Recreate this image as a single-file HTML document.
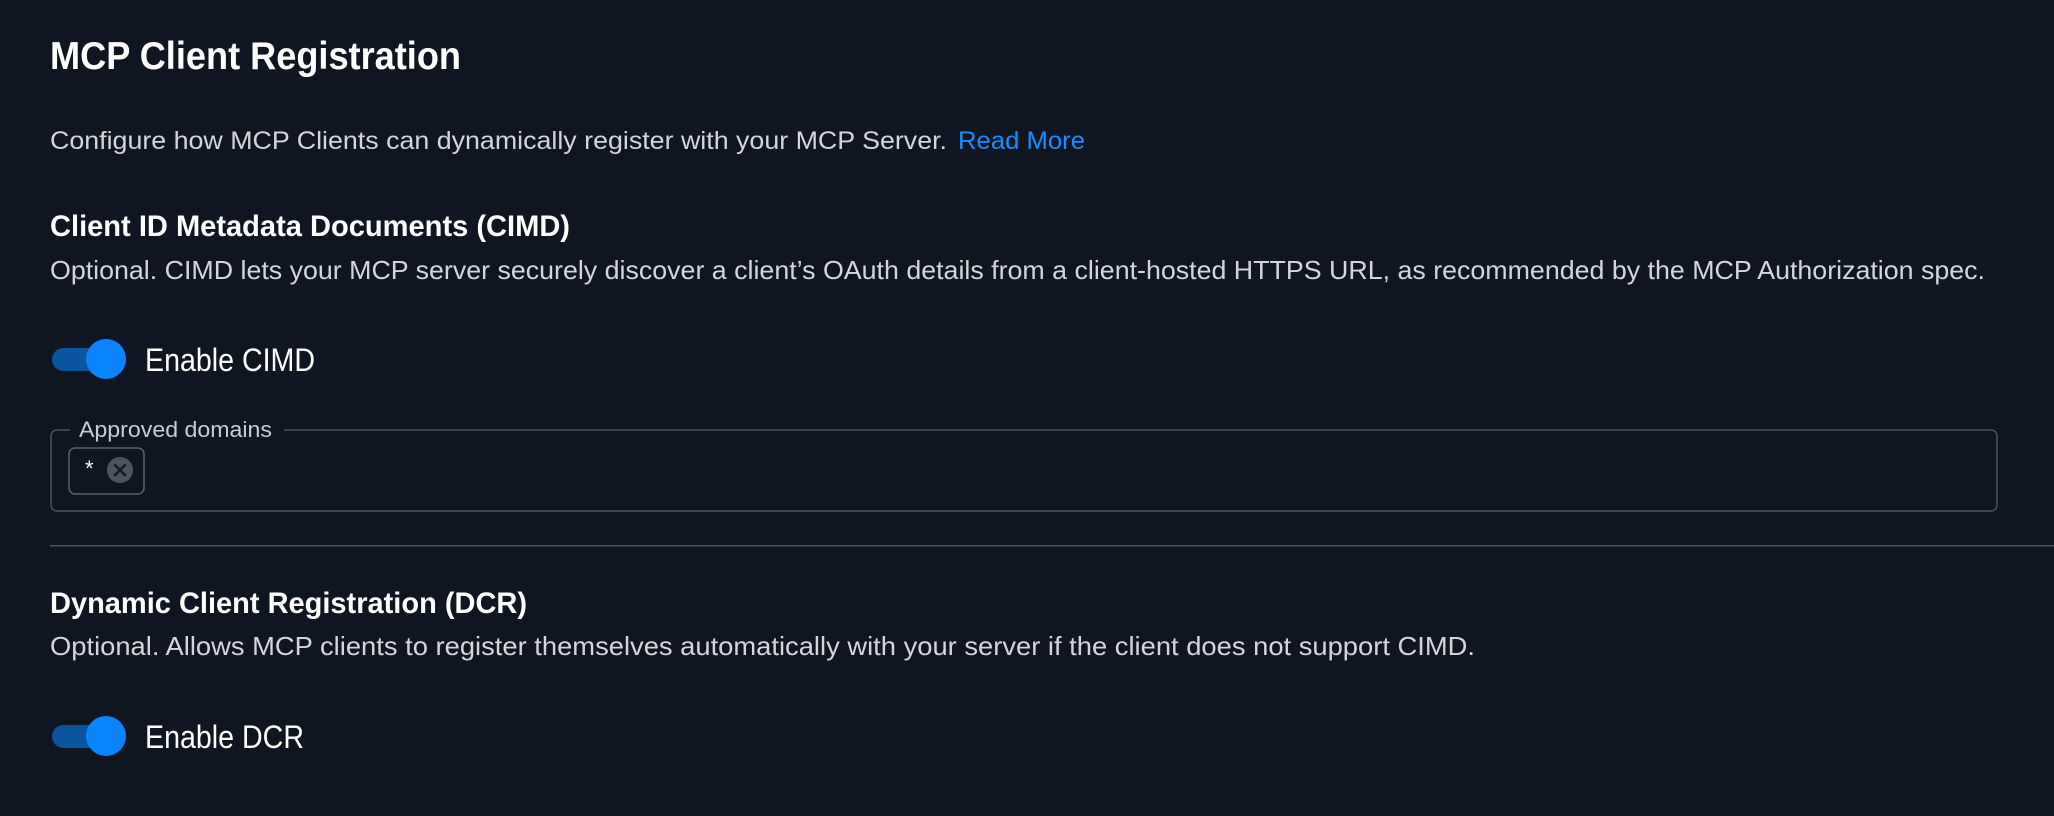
<!DOCTYPE html>
<html><head><meta charset="utf-8"><style>
html,body{margin:0;padding:0;background:#0f1621;width:2054px;height:816px;overflow:hidden}
svg{display:block}
text{font-family:"Liberation Sans",sans-serif}
</style></head><body>
<svg width="2054" height="816" viewBox="0 0 2054 816" xmlns="http://www.w3.org/2000/svg">
<rect width="2054" height="816" fill="#0f1621"/>
<text x="50" y="69" font-size="39" font-weight="bold" fill="#ffffff" textLength="411" lengthAdjust="spacingAndGlyphs">MCP Client Registration</text>
<text x="50" y="149" font-size="25" fill="#d2d6dc" textLength="897" lengthAdjust="spacingAndGlyphs">Configure how MCP Clients can dynamically register with your MCP Server.</text>
<text x="958" y="149" font-size="25" fill="#1a8cff" textLength="127" lengthAdjust="spacingAndGlyphs">Read More</text>

<text x="50" y="236" font-size="30" font-weight="bold" fill="#ffffff" textLength="520" lengthAdjust="spacingAndGlyphs">Client ID Metadata Documents (CIMD)</text>
<text x="50" y="279" font-size="26" fill="#d2d6dc" textLength="1935" lengthAdjust="spacingAndGlyphs">Optional. CIMD lets your MCP server securely discover a client’s OAuth details from a client-hosted HTTPS URL, as recommended by the MCP Authorization spec.</text>

<rect x="52" y="348" width="62" height="23" rx="11.5" fill="#0b549e"/>
<circle cx="106" cy="359" r="20" fill="#0a85ff"/>
<text x="145" y="371" font-size="32" fill="#ffffff" textLength="170" lengthAdjust="spacingAndGlyphs">Enable CIMD</text>

<path d="M70 430 H57 A6 6 0 0 0 51 436 V505 A6 6 0 0 0 57 511 H1991 A6 6 0 0 0 1997 505 V436 A6 6 0 0 0 1991 430 H284" fill="none" stroke="#4a525d" stroke-width="1.5"/>
<text x="79" y="437" font-size="22" fill="#c8ccd3" textLength="193" lengthAdjust="spacingAndGlyphs">Approved domains</text>
<rect x="69" y="448" width="75" height="46" rx="6" fill="none" stroke="#5a626d" stroke-width="1.5"/>
<text x="85" y="476" font-size="22" fill="#ffffff">*</text>
<circle cx="120" cy="470" r="13" fill="#4d545f"/>
<path d="M115 465 L125 475 M125 465 L115 475" stroke="#161c26" stroke-width="2.6" stroke-linecap="round"/>

<rect x="50" y="545" width="2004" height="1.5" fill="#4a5360"/>

<text x="50" y="613" font-size="30" font-weight="bold" fill="#ffffff" textLength="477" lengthAdjust="spacingAndGlyphs">Dynamic Client Registration (DCR)</text>
<text x="50" y="655" font-size="26" fill="#d2d6dc" textLength="1425" lengthAdjust="spacingAndGlyphs">Optional. Allows MCP clients to register themselves automatically with your server if the client does not support CIMD.</text>

<rect x="52" y="725" width="62" height="23" rx="11.5" fill="#0b549e"/>
<circle cx="106" cy="736" r="20" fill="#0a85ff"/>
<text x="145" y="748" font-size="32" fill="#ffffff" textLength="159" lengthAdjust="spacingAndGlyphs">Enable DCR</text>
</svg>
</body></html>
